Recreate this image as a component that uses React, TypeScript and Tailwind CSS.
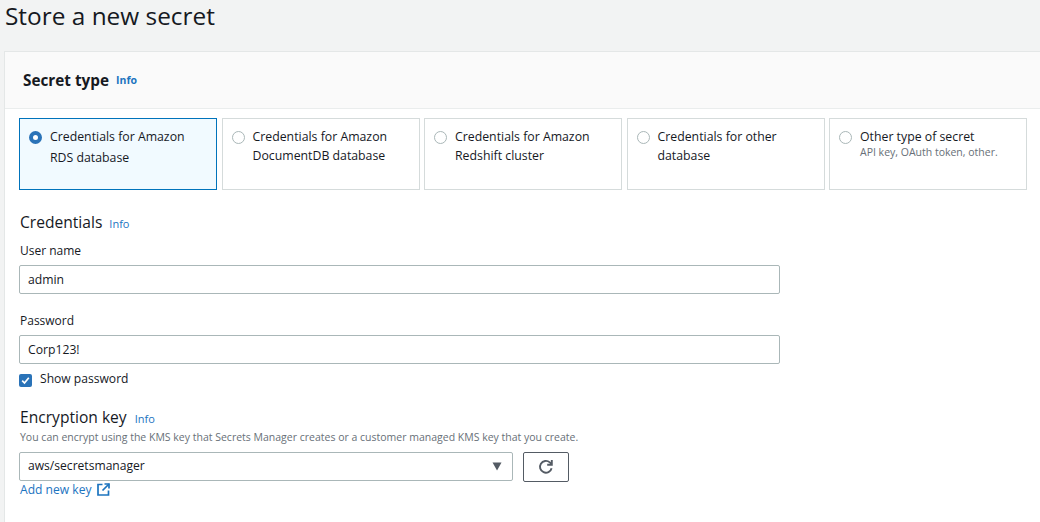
import React from 'react';

const font = { fontFamily: '"Open Sans", sans-serif' };

const Info = ({ className }: { className: string }) => (
  <a className={`text-[#1c74bf] ${className}`}>Info</a>
);

interface SecretOption {
  title: string;
  note?: string;
  selected?: boolean;
}

const options: SecretOption[] = [
  { title: 'Credentials for Amazon RDS database', selected: true },
  { title: 'Credentials for Amazon DocumentDB database' },
  { title: 'Credentials for Amazon Redshift cluster' },
  { title: 'Credentials for other database' },
  { title: 'Other type of secret', note: 'API key, OAuth token, other.' },
];

const OptionCard = ({ title, note, selected }: SecretOption) => (
  <div
    className={`h-[72px] border flex gap-[8px] pl-[9px] pr-[12px] pt-[8px] ${
      selected ? 'border-[#0073bb] bg-[#f1faff]' : 'border-[#d5dbdb] bg-white'
    }`}
  >
    {selected ? (
      <span className="mt-[4px] w-[13px] h-[13px] shrink-0 rounded-full border-[4px] border-[#2a73b8] bg-white" />
    ) : (
      <span className="mt-[4px] w-[13px] h-[13px] shrink-0 rounded-full border border-[#aab7b8] bg-white" />
    )}
    <div className="min-w-0">
      <div className={`text-[12.3px] text-[#16191f] ${selected ? 'leading-[20.5px]' : 'leading-[19px]'}`}>{title}</div>
      {note && <div className="text-[10.5px] leading-[13px] text-[#687078]">{note}</div>}
    </div>
  </div>
);

const TextField = ({ value }: { value: string }) => (
  <div className="w-[761px] h-[29px] border border-[#aab7b8] rounded-[2px] bg-white pl-[8px] pt-[1px] flex items-center text-[12.2px] text-[#16191f]">
    {value}
  </div>
);

export default function App() {
  return (
    <div className="w-[1040px] h-[522px] overflow-hidden bg-[#f2f3f3] pl-[4px]" style={font}>
      <h1 className="h-[51px] pl-[1px] text-[24.4px] leading-[31px] text-[#16191f]">Store a new secret</h1>
      <div className="h-[471px] bg-white border-l border-t border-[#e4e7e7]">
        <div className="h-[57px] bg-[#fafafa] border-b border-[#eaeded] pl-[18px] flex items-center gap-[7px]">
          <h2 className="text-[15.3px] font-bold text-[#16191f]">Secret type</h2>
          <Info className="text-[10.5px] font-bold mt-[1px]" />
        </div>
        <div className="pl-[14px] pt-[9px] pr-[13px]">
          <div className="grid grid-cols-5 gap-[4.5px]">
            {options.map((o) => (
              <OptionCard key={o.title} {...o} />
            ))}
          </div>

          <div className="mt-[22px] pl-[1px] flex items-center gap-[7px] h-[22px]">
            <h3 className="text-[15.6px] text-[#16191f]">Credentials</h3>
            <Info className="text-[11px] mt-[2px]" />
          </div>
          <label className="block mt-[8px] pl-[1px] text-[12px] leading-[18px] text-[#16191f]">User name</label>
          <div className="mt-[5px]">
            <TextField value="admin" />
          </div>
          <label className="block mt-[18px] pl-[1px] text-[12px] leading-[18px] text-[#16191f]">Password</label>
          <div className="mt-[5px]">
            <TextField value="Corp123!" />
          </div>
          <div className="mt-[6px] flex items-center gap-[8px] h-[18px]">
            <span className="w-[13px] h-[13px] mt-[2px] rounded-[2px] bg-[#2a73b8] flex items-center justify-center">
              <svg width="11" height="11" viewBox="0 0 11 11" fill="none">
                <path d="M2.2 5.6 L4.5 8 L8.8 2.8" stroke="white" strokeWidth="1.7" />
              </svg>
            </span>
            <span className="text-[12.1px] text-[#16191f]">Show password</span>
          </div>

          <div className="mt-[19px] pl-[1px] flex items-center gap-[8px] h-[22px]">
            <h3 className="text-[15.6px] text-[#16191f]">Encryption key</h3>
            <Info className="text-[11px] mt-[2px]" />
          </div>
          <p className="text-[10.5px] leading-[14px] mt-[1px] pl-[1px] text-[#687078]">
            You can encrypt using the KMS key that Secrets Manager creates or a customer managed KMS key that you create.
          </p>
          <div className="mt-[8px] flex items-start gap-[10px]">
            <div className="w-[494px] h-[29px] border border-[#aab7b8] rounded-[2px] bg-white pl-[8px] pr-[10px] flex items-center justify-between text-[12.1px] text-[#16191f]">
              <span>aws/secretsmanager</span>
              <svg width="10" height="9" viewBox="0 0 10 9">
                <path d="M0.5 0.5 H9.5 L5 8.5 Z" fill="#545b64" />
              </svg>
            </div>
            <button className="w-[46px] h-[30px] border border-[#545b64] rounded-[2px] bg-white flex items-center justify-center">
              <svg width="16" height="16" viewBox="0 0 16 16" fill="none" stroke="#545b64" strokeWidth="1.9">
                <path d="M13.6 9.2 A5.9 5.9 0 1 1 11.8 3.4 L13.6 5.2" />
                <path d="M13.8 1 V5.8 H9.2" />
              </svg>
            </button>
          </div>
          <a className="-mt-[1px] pl-[1px] flex items-center gap-[5px] text-[12.1px] leading-[17px] text-[#1c74bf]">
            Add new key
            <svg width="13" height="13" viewBox="0 0 13 13" fill="none" stroke="#1c74bf" strokeWidth="1.7">
              <path d="M5.5 1.5 H1 V12 H11.5 V7.5" />
              <path d="M7.5 1 H12 V5.5" />
              <path d="M12 1 L5.5 7.5" />
            </svg>
          </a>
        </div>
      </div>
    </div>
  );
}
